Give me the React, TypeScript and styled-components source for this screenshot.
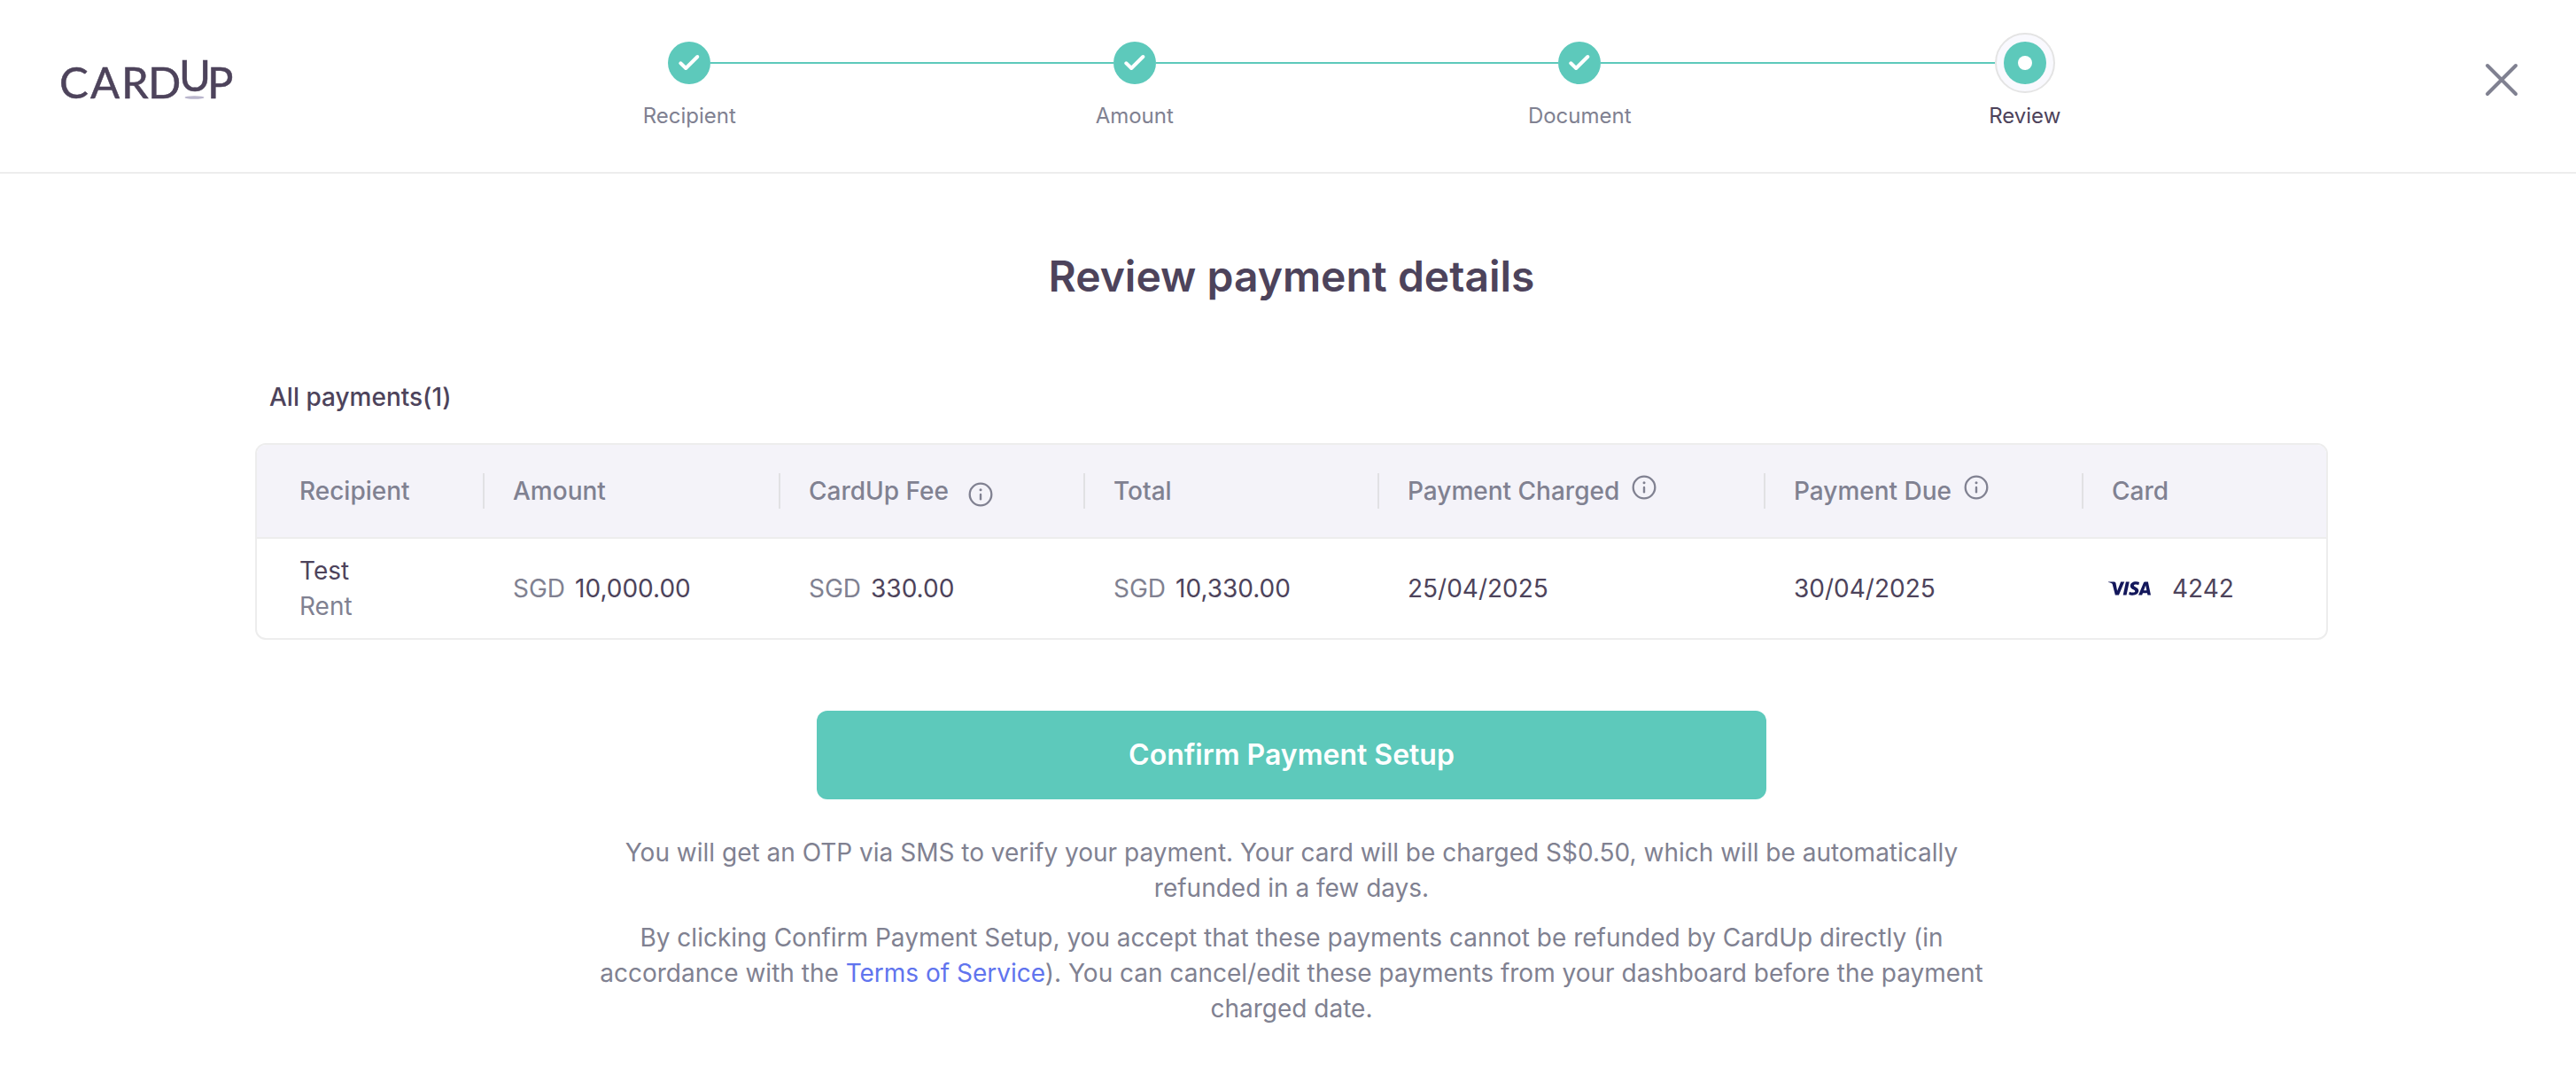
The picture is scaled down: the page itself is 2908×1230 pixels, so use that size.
import React from "react";
import styled, { createGlobalStyle } from "styled-components";
import { SiVisa } from "react-icons/si";

const ink = "#4d435b";
const muted = "#808191";
const teal = "#5dc9bb";
const rule = "#ededed";

const GlobalStyle = createGlobalStyle`
  *, *::before, *::after { box-sizing: border-box; }
  body {
    margin: 0;
    background: #fff;
    color: ${ink};
    font-family: Inter, "Liberation Sans", sans-serif;
    font-size: 28px;
    line-height: 40px;
    -webkit-font-smoothing: antialiased;
  }
  h1, h2, p, ol { margin: 0; padding: 0; }
`;

const Header = styled.header`
  display: grid;
  grid-template-columns: 527px 1fr 371px;
  min-height: 196px;
  border-bottom: 2px solid ${rule};
`;

const Brand = styled.a`
  justify-self: start;
  align-self: start;
  padding: 40px 0 0 64px;
  line-height: 0;
`;

const LogoText = styled.text`
  font-family: Lato, sans-serif;
  font-size: 49px;
  line-height: 60px;
  fill: ${ink};
  stroke: ${ink};
  stroke-width: 0.5px;
`;

const Steps = styled.ol`
  display: flex;
  list-style: none;
  padding-top: 37px;
`;

const Step = styled.li`
  flex: 1;
  display: flex;
  flex-direction: column;
  gap: 8px;
`;

const Track = styled.div`
  display: flex;
  align-items: center;
  height: 68px;
`;

const Connector = styled.span<{ $hidden?: boolean }>`
  flex: 1;
  height: 2px;
  background: ${(p) => (p.$hidden ? "transparent" : teal)};
`;

const Marker = styled.span`
  display: flex;
  align-items: center;
  justify-content: center;
  width: 48px;
  height: 48px;
  border-radius: 50%;
  background: ${teal};
`;

const Ring = styled.span`
  display: flex;
  align-items: center;
  justify-content: center;
  width: 68px;
  height: 68px;
  border: 2px solid #e4e4e4;
  border-radius: 50%;
  background: #f9f9fe;
`;

const Dot = styled.span`
  width: 16px;
  height: 16px;
  border-radius: 50%;
  background: #fff;
`;

const StepLabel = styled.span<{ $current?: boolean }>`
  text-align: center;
  font-size: 24px;
  line-height: 36px;
  color: ${(p) => (p.$current ? ink : muted)};
`;

const Close = styled.button`
  justify-self: end;
  align-self: start;
  margin: 66px 60px 0 0;
  padding: 0;
  width: 48px;
  height: 48px;
  border: 0;
  background: none;
  cursor: pointer;
`;

const Main = styled.main`
  padding: 84px 280px 60px 288px;
`;

const Title = styled.h1`
  font-size: 48px;
  line-height: 64px;
  font-weight: 600;
  text-align: center;
`;

const Subtitle = styled.h2`
  margin-top: 84px;
  padding-left: 16px;
  font-size: 28px;
  line-height: 40px;
  font-weight: 500;
`;

const TableCard = styled.div`
  margin-top: 32px;
  border: 2px solid ${rule};
  border-radius: 12px;
  overflow: hidden;
`;

const Table = styled.table`
  width: 100%;
  table-layout: fixed;
  border-collapse: separate;
  border-spacing: 0;
`;

const HeadCell = styled.th`
  padding: 32px 0;
  background: #f4f3f9;
  border-bottom: 2px solid ${rule};
  color: ${muted};
  font-weight: 500;
  text-align: left;
`;

const HeadInner = styled.div<{ $first?: boolean; $last?: boolean; $gap: number; $drop?: boolean }>`
  display: flex;
  align-items: ${(p) => (p.$drop ? "flex-end" : "flex-start")};
  gap: ${(p) => p.$gap}px;
  height: 40px;
  padding-left: ${(p) => (p.$first ? 48 : 32)}px;
  border-right: ${(p) => (p.$last ? "0" : "2px solid #e1e1e4")};
`;

const Cell = styled.td<{ $indent?: number }>`
  padding: 16px 0 16px ${(p) => p.$indent ?? 32}px;
`;

const Secondary = styled.div`
  color: ${muted};
`;

const Money = styled.div`
  display: flex;
  gap: 11px;
`;

const Currency = styled.span`
  color: ${muted};
`;

const CardInfo = styled.div`
  display: flex;
  align-items: center;
  gap: 24px;
  height: 40px;
`;

const InfoButton = styled.button`
  width: 32px;
  height: 32px;
  padding: 0;
  border: 0;
  background: none;
  color: ${muted};
  line-height: 0;
  cursor: pointer;
`;

const Footer = styled.section`
  display: flex;
  flex-direction: column;
  align-items: center;
  margin-top: 80px;
`;

const Confirm = styled.button`
  width: 100%;
  max-width: 1072px;
  height: 100px;
  border: 0;
  border-radius: 12px;
  background: ${teal};
  color: #fff;
  font-family: inherit;
  font-size: 32px;
  line-height: 40px;
  font-weight: 600;
  cursor: pointer;
`;

const Notes = styled.div`
  display: flex;
  flex-direction: column;
  gap: 16px;
  max-width: 1568px;
  margin-top: 40px;
  color: ${muted};
  text-align: center;
`;

const Link = styled.a`
  color: #6074ee;
  text-decoration: none;
`;

const Logo = () => (
  <svg width="204" height="92" viewBox="0 0 204 92" role="img" aria-label="CardUp">
    <LogoText y="71" x="3 38 73 103">CARD</LogoText>
    <LogoText y="63" x="138">U</LogoText>
    <LogoText y="71" x="170">P</LogoText>
    <ellipse cx="155.500" cy="70" rx="11" ry="1.800" fill="#b9b5cc" />
  </svg>
);

const CheckMark = () => (
  <svg width="48" height="48" viewBox="0 0 48 48" aria-hidden="true">
    <path d="M14.300 24.300 L20.200 30 L33.300 17" fill="none" stroke="#fff" strokeWidth="4" strokeLinecap="round" strokeLinejoin="round" />
  </svg>
);

const Info = ({ label }: { label: string }) => (
  <InfoButton type="button" aria-label={label}>
    <svg width="32" height="32" viewBox="0 0 32 32" aria-hidden="true">
      <circle cx="16" cy="16" r="12.300" fill="none" stroke="currentColor" strokeWidth="2.300" />
      <circle cx="16" cy="10.800" r="1.500" fill="currentColor" />
      <path d="M16 16 V21.300" stroke="currentColor" strokeWidth="2.400" strokeLinecap="round" />
    </svg>
  </InfoButton>
);

const steps = ["Recipient", "Amount", "Document", "Review"];

const columns: { label: string; width: number; info?: boolean; gap?: number; drop?: boolean }[] = [
  { label: "Recipient", width: 257 },
  { label: "Amount", width: 334 },
  { label: "CardUp Fee", width: 344, info: true, gap: 20, drop: true },
  { label: "Total", width: 332 },
  { label: "Payment Charged", width: 436, info: true, gap: 12 },
  { label: "Payment Due", width: 359, info: true, gap: 12 },
  { label: "Card", width: 274 },
];

const Amount = ({ value }: { value: string }) => (
  <Money>
    <Currency>SGD</Currency>
    <span>{value}</span>
  </Money>
);

export default function App() {
  const last = steps.length - 1;
  return (
    <>
      <GlobalStyle />
      <Header>
        <Brand href="#" aria-label="CardUp home">
          <Logo />
        </Brand>
        <Steps>
          {steps.map((name, i) => (
            <Step key={name} aria-current={i === last ? "step" : undefined}>
              <Track>
                <Connector $hidden={i === 0} />
                {i === last ? (
                  <Ring>
                    <Marker>
                      <Dot />
                    </Marker>
                  </Ring>
                ) : (
                  <Marker>
                    <CheckMark />
                  </Marker>
                )}
                <Connector $hidden={i === last} />
              </Track>
              <StepLabel $current={i === last}>{name}</StepLabel>
            </Step>
          ))}
        </Steps>
        <Close type="button" aria-label="Close">
          <svg width="48" height="48" viewBox="0 0 48 48" aria-hidden="true">
            <path d="M8 8 L40 40 M40 8 L8 40" stroke={muted} strokeWidth="4" strokeLinecap="round" />
          </svg>
        </Close>
      </Header>
      <Main>
        <Title>Review payment details</Title>
        <Subtitle>All payments(1)</Subtitle>
        <TableCard>
          <Table>
            <colgroup>
              {columns.map((c) => (
                <col key={c.label} style={{ width: c.width }} />
              ))}
            </colgroup>
            <thead>
              <tr>
                {columns.map((c, i) => (
                  <HeadCell key={c.label} scope="col">
                    <HeadInner
                      $first={i === 0}
                      $last={i === columns.length - 1}
                      $gap={c.gap ?? 0}
                      $drop={c.drop}
                    >
                      <span>{c.label}</span>
                      {c.info && <Info label={`About ${c.label}`} />}
                    </HeadInner>
                  </HeadCell>
                ))}
              </tr>
            </thead>
            <tbody>
              <tr>
                <Cell $indent={48}>
                  <div>Test</div>
                  <Secondary>Rent</Secondary>
                </Cell>
                <Cell><Amount value="10,000.00" /></Cell>
                <Cell><Amount value="330.00" /></Cell>
                <Cell><Amount value="10,330.00" /></Cell>
                <Cell>25/04/2025</Cell>
                <Cell>30/04/2025</Cell>
                <Cell $indent={28}>
                  <CardInfo>
                    <SiVisa size={48} color="#13175b" aria-label="Visa" />
                    <span>4242</span>
                  </CardInfo>
                </Cell>
              </tr>
            </tbody>
          </Table>
        </TableCard>
        <Footer>
          <Confirm type="button">Confirm Payment Setup</Confirm>
          <Notes>
            <p>
              You will get an OTP via SMS to verify your payment. Your card will be charged S$0.50,
              which will be automatically refunded in a few days.
            </p>
            <p>
              By clicking Confirm Payment Setup, you accept that these payments cannot be refunded
              by CardUp directly (in accordance with the <Link href="#">Terms of Service</Link>).
              You can cancel/edit these payments from your dashboard before the payment charged
              date.
            </p>
          </Notes>
        </Footer>
      </Main>
    </>
  );
}
